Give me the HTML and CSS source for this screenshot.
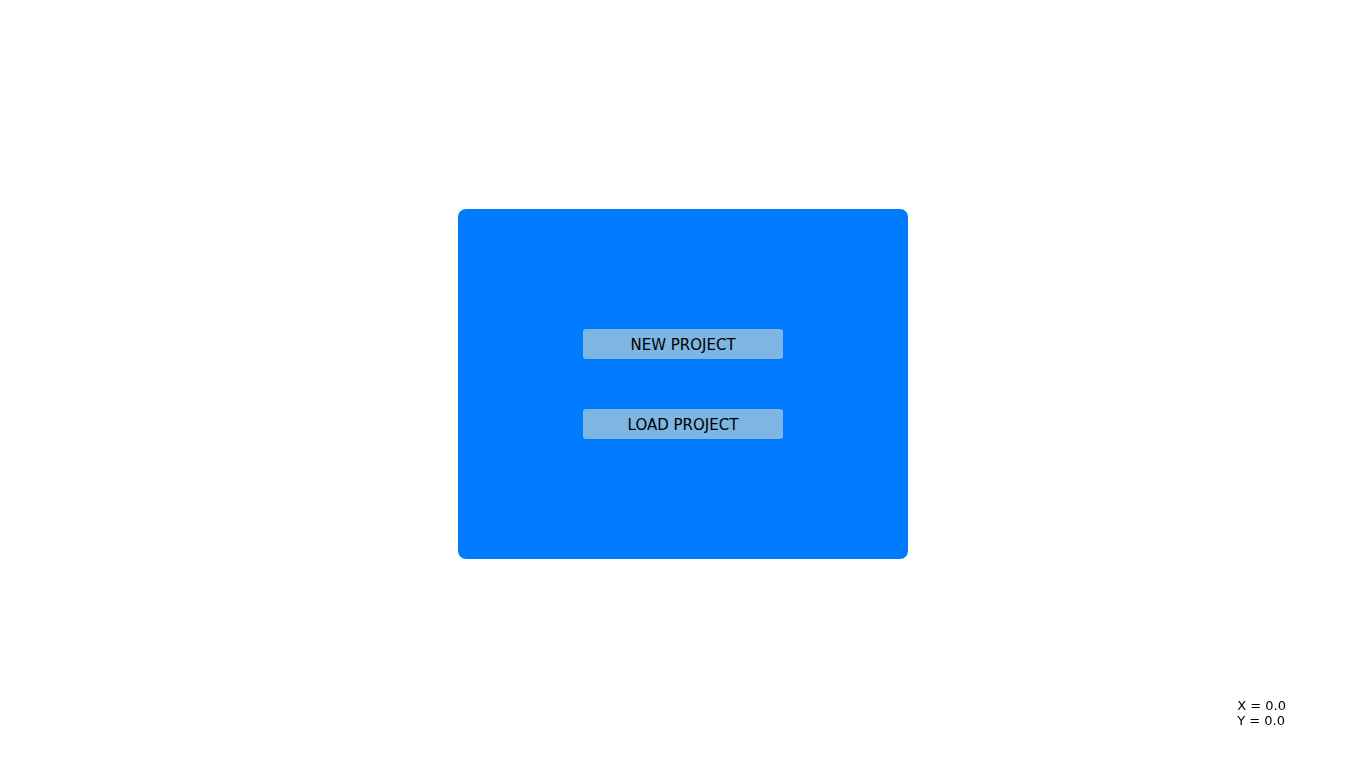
FILE: index.html
```html
<!DOCTYPE html>
<html>
<head>
<meta charset="utf-8">
<title>Projects</title>
<link rel="stylesheet" href="styles.css">
</head>
<body>
<main class="stage">
  <div class="panel">
    <button class="btn">NEW PROJECT</button>
    <button class="btn">LOAD PROJECT</button>
  </div>
</main>
<div class="coords">
  <div>X = 0.0</div>
  <div>Y = 0.0</div>
</div>
</body>
</html>
```
FILE: styles.css
```css
html, body {
  margin: 0;
  padding: 0;
  height: 100%;
  background: #ffffff;
  font-family: "DejaVu Sans", sans-serif;
}
.stage {
  height: 100vh;
  display: flex;
  align-items: center;
  justify-content: center;
}
.panel {
  width: 450px;
  height: 350px;
  background: #007bff;
  border-radius: 8px;
  display: flex;
  flex-direction: column;
  align-items: center;
  justify-content: center;
  gap: 50px;
}
.btn {
  width: 200px;
  height: 30px;
  border: none;
  border-radius: 3px;
  background: #7db5e3;
  color: #000;
  font-family: "DejaVu Sans", sans-serif;
  font-size: 15px;
  padding: 2px 0 0 0;
  cursor: pointer;
}
.coords {
  position: fixed;
  right: 80px;
  bottom: 40px;
  font-size: 13px;
  line-height: 15px;
  color: #000;
}
```
